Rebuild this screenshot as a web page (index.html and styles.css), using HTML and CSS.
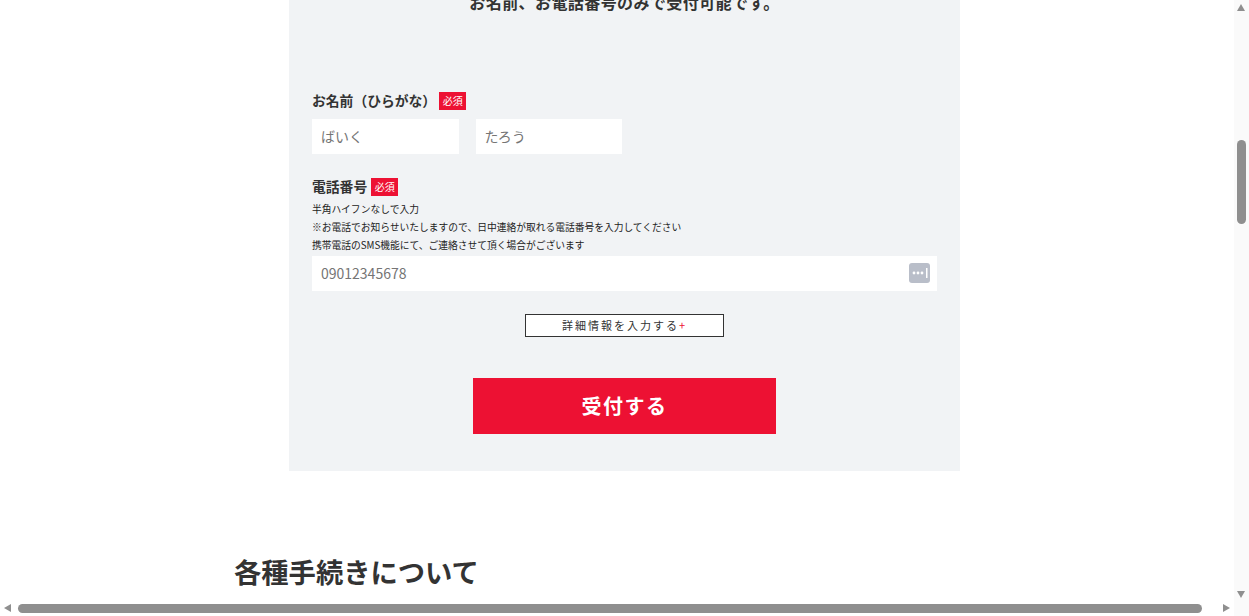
FILE: index.html
```html
<!DOCTYPE html>
<html lang="ja">
  <head>
    <meta charset="UTF-8" />
    <meta name="viewport" content="width=device-width, initial-scale=1.0" />
    <title>受付フォーム</title>
    <link rel="stylesheet" href="styles.css">
  </head>
  <body>
    <div class="page">
      <section class="panel">
        <p class="lead">お名前、お電話番号のみで受付可能です。</p>

        <div class="field name-field">
          <div class="label">
            <span class="label-text">お名前（ひらがな）</span>
            <span class="req">必須</span>
          </div>
          <div class="name-row">
            <input class="input short" type="text" placeholder="ばいく">
            <input class="input short" type="text" placeholder="たろう">
          </div>
        </div>

        <div class="field tel-field">
          <div class="label">
            <span class="label-text">電話番号</span>
            <span class="req">必須</span>
          </div>
          <p class="note">半角ハイフンなしで入力</p>
          <p class="note">※お電話でお知らせいたしますので、日中連絡が取れる電話番号を入力してください</p>
          <p class="note">携帯電話のSMS機能にて、ご連絡させて頂く場合がございます</p>
          <div class="tel-wrap">
            <input class="input wide" type="text" placeholder="09012345678">
            <svg class="key" width="21" height="20" viewBox="0 0 21 20">
              <rect width="21" height="20" rx="3" fill="#b9bec9" />
              <circle cx="5" cy="10" r="1.4" fill="#fff" />
              <circle cx="9" cy="10" r="1.4" fill="#fff" />
              <circle cx="13" cy="10" r="1.4" fill="#fff" />
              <rect x="17" y="5" width="1.5" height="10" fill="#fff" />
            </svg>
          </div>
        </div>

        <button class="more">詳細情報を入力する<span class="plus">+</span></button>
        <button class="submit">受付する</button>
      </section>

      <h2 class="heading">各種手続きについて</h2>
    </div>

    <div class="bar-v">
      <span class="arrow up"></span>
      <span class="thumb-v"></span>
      <span class="arrow down"></span>
    </div>
    <div class="bar-h">
      <span class="arrow left"></span>
      <span class="thumb-h"></span>
      <span class="arrow right"></span>
    </div>
  </body>
</html>
```

FILE: styles.css
```css
* {
  box-sizing: border-box;
  margin: 0px;
  padding: 0px;
}
html,
body {
  height: 100%;
  overflow: hidden;
  background: #fff;
}
body {
  font-family: "Noto Sans CJK JP", "Noto Sans", sans-serif;
  color: #333;
}
.page {
  width: 1249px;
  margin-top: -18px;
}
.panel {
  width: 671px;
  height: 489px;
  margin: 0 auto;
  padding: 0 23px;
  background: #f1f3f5;
  display: flex;
  flex-direction: column;
}
.lead {
  font-size: 16px;
  font-weight: 700;
  line-height: 40px;
  letter-spacing: 0.42px;
  text-align: center;
}
.name-field {
  margin-top: 69px;
}
.tel-field {
  margin-top: 23px;
}
.label {
  display: flex;
  align-items: center;
  gap: 3px;
  height: 20px;
  font-size: 13.8px;
  font-weight: 700;
}
.tel-field .label {
  gap: 4px;
}
.label-text {
  margin-bottom: 2px;
}
.req {
  width: 27px;
  height: 18px;
  background: #ed1133;
  color: #fff;
  font-size: 10px;
  font-weight: 400;
  line-height: 17px;
  text-align: center;
}
.name-row {
  display: flex;
  gap: 17px;
  margin-top: 8px;
}
.input {
  height: 35px;
  padding: 0 9px 2px;
  border: 0;
  background: #fff;
  font-family: inherit;
  font-size: 14px;
  color: #333;
}
.input::placeholder {
  color: #757575;
  opacity: 1;
}
.short {
  width: 146.5px;
}
.wide {
  width: 100%;
  display: block;
}
.note {
  font-size: 9.75px;
  line-height: 18px;
  color: #222;
}
.note:first-of-type {
  margin-top: 3px;
}
.tel-wrap {
  position: relative;
  margin-top: 2px;
}
.key {
  position: absolute;
  top: 7px;
  right: 7px;
}
.more {
  align-self: center;
  width: 199px;
  height: 23px;
  margin-top: 23px;
  padding-bottom: 2px;
  border: 1px solid #333;
  background: #fff;
  font-family: inherit;
  font-size: 11px;
  letter-spacing: 2px;
  color: #333;
}
.plus {
  color: #ed1133;
}
.submit {
  align-self: center;
  width: 303px;
  height: 56px;
  margin-top: 41px;
  padding-bottom: 2px;
  border: 0;
  background: #ed1133;
  color: #fff;
  font-family: inherit;
  font-size: 20px;
  font-weight: 700;
  letter-spacing: 1.5px;
}
.heading {
  margin: 79px 0 0 234px;
  font-size: 27.3px;
  font-weight: 700;
  line-height: 42px;
}
.bar-v {
  position: fixed;
  top: 0;
  right: 0;
  width: 15px;
  height: 100%;
  background: #fafafa;
}
.bar-h {
  position: fixed;
  left: 0;
  bottom: 0;
  width: 1234px;
  height: 15px;
  background: #fff;
}
.thumb-v {
  position: absolute;
  top: 140px;
  left: 3px;
  width: 9px;
  height: 84px;
  border-radius: 5px;
  background: #8f8f8f;
}
.thumb-h {
  position: absolute;
  top: 3px;
  left: 18px;
  width: 1184px;
  height: 9px;
  border-radius: 5px;
  background: #8f8f8f;
}
.arrow {
  position: absolute;
  width: 0;
  height: 0;
  border: 4.5px solid transparent;
}
.up {
  top: 0px;
  left: 3px;
  border-bottom: 7px solid #8f8f8f;
}
.down {
  bottom: 14px;
  left: 3px;
  border-top: 7px solid #8f8f8f;
}
.left {
  top: 3px;
  left: 0px;
  border-right: 7px solid #8f8f8f;
}
.right {
  top: 3px;
  left: 1223px;
  border-left: 7px solid #8f8f8f;
}
```
